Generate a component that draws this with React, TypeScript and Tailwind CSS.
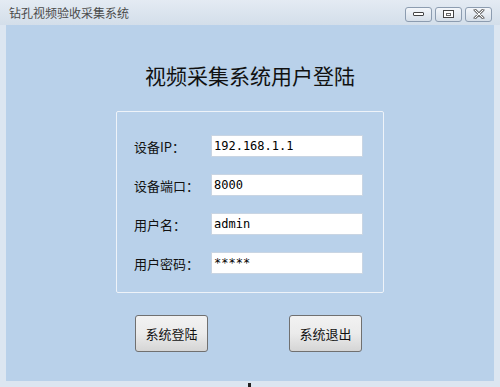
import React from "react";

const cjk = { fontFamily: '"Noto Sans CJK SC", "Noto Sans", sans-serif' };
const mono = { fontFamily: '"DejaVu Sans Mono", "Liberation Mono", monospace' };

function Field({ label, value }: { label: string; value: string }) {
  return (
    <div className="flex items-center h-[22px]">
      <div className="w-[77px] text-[13px] text-[#111] leading-none" style={cjk}>
        {label}
      </div>
      <div
        className="w-[152px] h-[22px] bg-white border border-[#c9d5e3] flex items-center pl-[2px] text-[12px] text-black"
        style={mono}
      >
        {value}
      </div>
    </div>
  );
}

function WinBtn({ children }: { children: React.ReactNode }) {
  return (
    <div className="w-[27px] h-[15px] rounded-[3px] border border-[#8c9cb0] bg-gradient-to-b from-[#f3f6fa] to-[#d6dfe9] flex items-center justify-center">
      {children}
    </div>
  );
}

function Btn({ label }: { label: string }) {
  return (
    <div
      className="w-[73px] h-[37px] rounded-[3px] border border-[#707070] bg-gradient-to-b from-[#f2f2f2] via-[#ebebeb] to-[#d5d5d5] flex items-center justify-center text-[13px] text-[#111]"
      style={cjk}
    >
      {label}
    </div>
  );
}

export default function App() {
  return (
    <div className="w-[500px] h-[387px] bg-[#dce6f1] flex flex-col relative overflow-hidden">
      <div className="h-[25px] flex items-center justify-between pl-[9px] pr-[8px] bg-gradient-to-b from-[#e4ebf3] to-[#d3deea]">
        <div className="text-[12px] text-[#4a4a4a] leading-none" style={cjk}>
          钻孔视频验收采集系统
        </div>
        <div className="flex gap-[3px] pt-[3px]">
          <WinBtn>
            <div className="w-[11px] h-[4px] border border-[#444] bg-white rounded-[1px]" />
          </WinBtn>
          <WinBtn>
            <div className="w-[11px] h-[8px] border border-[#444] bg-white flex items-center justify-center">
              <div className="w-[5px] h-[3px] border border-[#666]" />
            </div>
          </WinBtn>
          <WinBtn>
            <svg width="12" height="10" viewBox="0 0 12 10">
              <path d="M2 1 L10 9 M10 1 L2 9" stroke="#777" strokeWidth="3" strokeLinecap="round" />
              <path d="M2 1 L10 9 M10 1 L2 9" stroke="#fff" strokeWidth="1" strokeLinecap="round" />
            </svg>
          </WinBtn>
        </div>
      </div>
      <div className="mx-[6px] h-[356px] bg-[#b9d1ea] flex flex-col items-center">
        <div className="mt-[40px] text-[21px] leading-none text-[#111]" style={cjk}>
          视频采集系统用户登陆
        </div>
        <div className="mt-[25px] w-[268px] h-[182px] border border-[#eef3f9] rounded-[2px] flex flex-col gap-[17px] pt-[23px] pl-[17px]">
          <Field label="设备IP：" value="192.168.1.1" />
          <Field label="设备端口：" value="8000" />
          <Field label="用户名：" value="admin" />
          <Field label="用户密码：" value="*****" />
        </div>
        <div className="mt-[22px] w-[227px] self-start ml-[129px] flex justify-between">
          <Btn label="系统登陆" />
          <Btn label="系统退出" />
        </div>
      </div>
      <div className="absolute left-[248px] top-[383px] w-[3px] h-[4px] bg-[#222]" />
    </div>
  );
}
